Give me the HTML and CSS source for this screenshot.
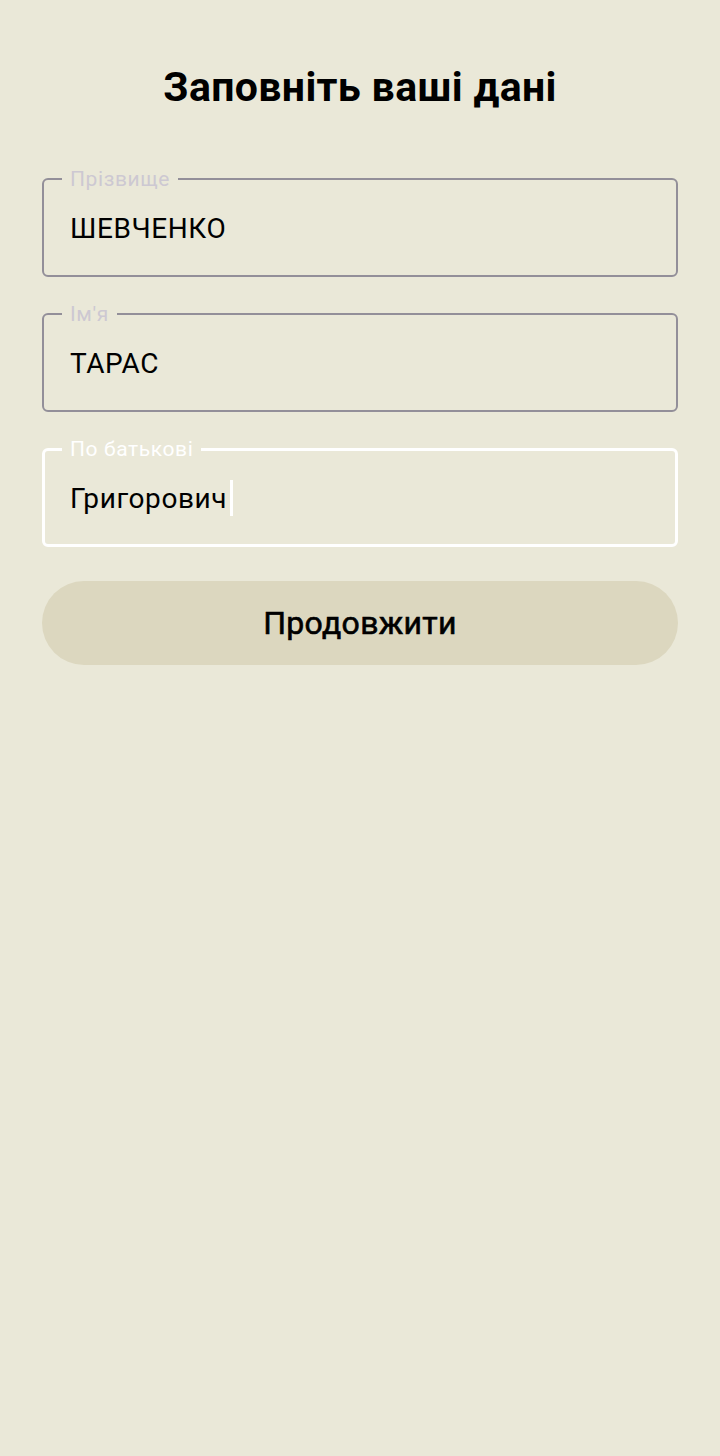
FILE: index.html
```html
<!DOCTYPE html>
<html lang="uk">
<head>
<meta charset="utf-8">
<title>Заповніть ваші дані</title>
<link rel="stylesheet" href="styles.css">
</head>
<body>
<main class="screen">
  <h1 class="title">Заповніть ваші дані</h1>
  <form class="form">
    <fieldset class="field">
      <legend class="label">Прізвище</legend>
      <div class="value">ШЕВЧЕНКО</div>
    </fieldset>
    <fieldset class="field">
      <legend class="label">Ім'я</legend>
      <div class="value">ТАРАС</div>
    </fieldset>
    <fieldset class="field focused">
      <legend class="label">По батькові</legend>
      <div class="value">Григорович<span class="caret"></span></div>
    </fieldset>
    <button type="button" class="btn">Продовжити</button>
  </form>
</main>
</body>
</html>
```
FILE: styles.css
```css
html, body {
  margin: 0;
  padding: 0;
  background: #eae8d8;
}
body {
  font-family: Roboto, "Noto Sans", sans-serif;
  color: #000;
  width: 720px;
  min-height: 1456px;
}
.screen {
  padding: 61px 42px 0;
}
.title {
  margin: 0;
  text-align: center;
  font-size: 41px;
  font-weight: 700;
  line-height: 52px;
  letter-spacing: 0.35px;
}
.form {
  margin-top: 56px;
  display: flex;
  flex-direction: column;
}
.field {
  margin: 0 0 27px;
  padding: 0 18px 7px;
  border: 2px solid #938f99;
  border-radius: 6px;
  min-width: 0;
}
.label {
  padding: 0 8px;
  font-size: 21px;
  line-height: 20px;
  color: #cdc8d2;
  letter-spacing: 0.6px;
}
.value {
  padding: 0 8px;
  height: 79px;
  display: flex;
  align-items: center;
  font-size: 28px;
  letter-spacing: 0.6px;
}
.focused {
  border: 3px solid #ffffff;
  padding: 0 17px 6px;
}
.focused .label {
  color: #ffffff;
}
.caret {
  display: inline-block;
  width: 3px;
  height: 36px;
  background: #ffffff;
  margin-left: 3px;
  margin-top: -2px;
}
.btn {
  margin-top: 7px;
  height: 84px;
  border: none;
  border-radius: 42px;
  background: #dcd7bf;
  font-family: Roboto, "Noto Sans", sans-serif;
  font-size: 32px;
  font-weight: 400;
  color: #000;
  letter-spacing: 0.3px;
  -webkit-text-stroke: 0.6px #000;
}
```
